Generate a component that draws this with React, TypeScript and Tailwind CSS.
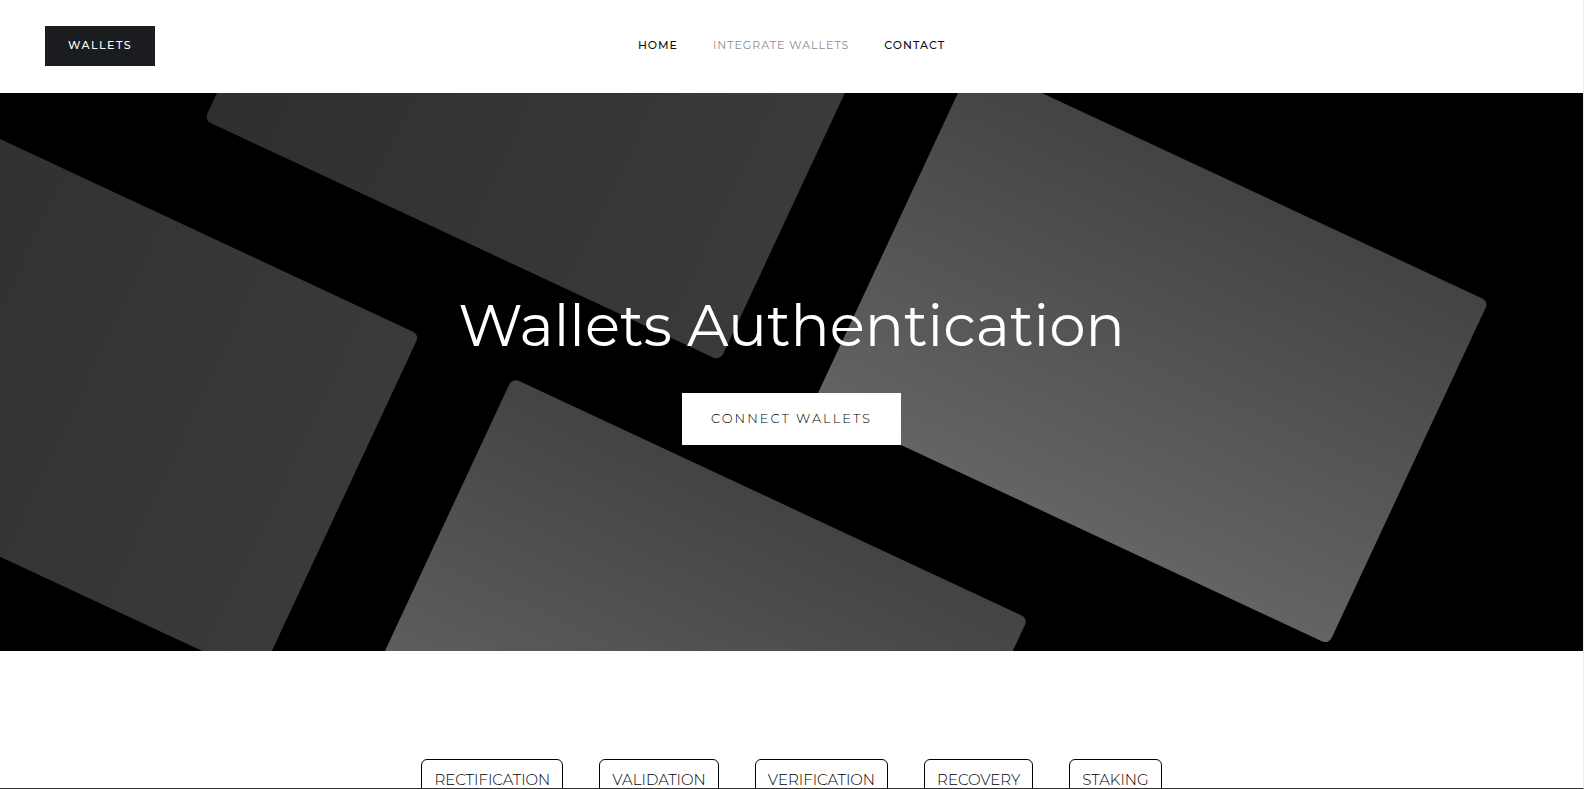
const navLinks = [
  { label: 'Home', active: false },
  { label: 'Integrate Wallets', active: true },
  { label: 'Contact', active: false },
];

const services = ['Rectification', 'Validation', 'Verification', 'Recovery', 'Staking'];

function HeroArt() {
  return (
    <svg
      className="absolute inset-0 h-full w-full"
      viewBox="0 93 1583 558"
      preserveAspectRatio="xMidYMid slice"
      aria-hidden="true"
    >
      <defs>
        <linearGradient id="dark" x1="0" y1="0" x2="1" y2="0">
          <stop offset="0" stopColor="#2f2f2f" />
          <stop offset="1" stopColor="#3a3a3a" />
        </linearGradient>
        <linearGradient id="light" x1="0" y1="0" x2="0" y2="1">
          <stop offset="0" stopColor="#434343" />
          <stop offset="1" stopColor="#646464" />
        </linearGradient>
      </defs>
      <g transform="rotate(25)">
        <rect x="236" y="-356" width="569" height="378.5" rx="7" fill="url(#dark)" />
        <rect x="907.5" y="-356" width="569" height="378.5" rx="7" fill="url(#light)" />
        <rect x="-47.5" y="126" width="569" height="378.5" rx="7" fill="url(#dark)" />
        <rect x="624" y="126" width="569" height="378.5" rx="7" fill="url(#light)" />
      </g>
    </svg>
  );
}

function Header() {
  return (
    <header className="grid shrink-0 grid-cols-[1fr_auto_1fr] items-center px-[45px] pt-[26px] pb-[27px]">
      <a
        href="#"
        className="flex h-10 w-[110px] items-center justify-center bg-[#1b1c1f] pb-[2px] text-[11px] font-medium tracking-[1.5px] text-white uppercase"
      >
        Wallets
      </a>
      <nav className="flex gap-[35px] pb-[2px] text-[11px] leading-4 tracking-[1px] uppercase">
        {navLinks.map((link) => (
          <a
            key={link.label}
            href="#"
            className={link.active ? 'font-normal text-[#8c8c8c]' : 'font-medium text-[#0c0d10]'}
          >
            {link.label}
          </a>
        ))}
      </nav>
    </header>
  );
}

export default function App() {
  return (
    <div className="flex h-screen flex-col overflow-hidden border-r border-b border-r-[#ececec] border-b-[#333333] bg-white font-[Montserrat,Inter,sans-serif]">
      <Header />
      <main className="shrink-0">
        <section className="relative overflow-hidden bg-black pt-[203px] pb-[206px]">
          <HeroArt />
          <div className="relative flex flex-col items-center gap-[37px]">
            <h1 className="text-center text-[58px] leading-[60px] font-normal text-white">
              Wallets Authentication
            </h1>
            <button
              type="button"
              className="h-[52px] w-[219px] bg-white text-[13px] font-light tracking-[2px] text-black uppercase"
            >
              Connect Wallets
            </button>
          </div>
        </section>
        <section className="flex flex-wrap justify-center gap-9 px-9 pt-[108px]">
          {services.map((service) => (
            <button
              key={service}
              type="button"
              className="h-[42px] rounded-md border border-black px-3 text-[15px] font-light text-black uppercase"
            >
              {service}
            </button>
          ))}
        </section>
      </main>
    </div>
  );
}
